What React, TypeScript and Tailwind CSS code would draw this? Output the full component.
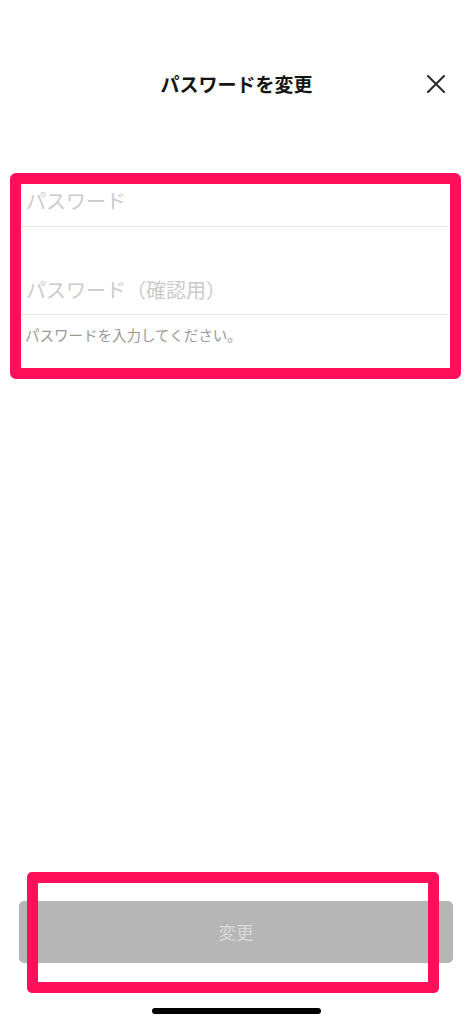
import { useState } from "react";

const font = "font-['Noto_Sans_CJK_JP','Noto_Sans',sans-serif]";

function CloseIcon() {
  return (
    <svg aria-hidden="true" viewBox="0 0 20 18" className="h-[18px] w-[20px]" fill="none" stroke="#2a2a2a" strokeWidth="2" strokeLinecap="round">
      <path d="M2 1l16 16M18 1L2 17" />
    </svg>
  );
}

export default function App() {
  const [pw, setPw] = useState("");
  const [pw2, setPw2] = useState("");

  return (
    <div className={`${font} flex h-[1024px] w-[473px] flex-col bg-white`}>
      {/* header */}
      <div className="mt-[56px] grid h-[56px] grid-cols-[1fr_auto_1fr] items-center">
        <div />
        <h1 className="text-[19px] leading-[24px] font-bold text-[#151515]">パスワードを変更</h1>
        <div className="flex justify-end pr-[27px]">
          <button aria-label="閉じる" className="flex items-center justify-center">
            <CloseIcon />
          </button>
        </div>
      </div>

      {/* form (highlighted) */}
      <div className="mt-[61px] ml-[10px] w-[451px] rounded-[6px] border-[11px] border-[#ff0f5a]">
        <div className="h-[42px] pt-[6px] pl-[5px]">
          <input
            type="password"
            value={pw}
            onChange={(e) => setPw(e.target.value)}
            placeholder="パスワード"
            className="h-[20px] w-full bg-transparent text-[20px] leading-[20px] text-[#222] outline-none placeholder:text-[#cbcbcb]"
          />
        </div>
        <div className="mr-[2px] h-px bg-[#e6e6e6]" />
        <div className="h-[87px] pt-[52px] pl-[5px]">
          <input
            type="password"
            value={pw2}
            onChange={(e) => setPw2(e.target.value)}
            placeholder="パスワード（確認用）"
            className="h-[20px] w-full bg-transparent text-[20px] leading-[20px] text-[#222] outline-none placeholder:text-[#cbcbcb]"
          />
        </div>
        <div className="mr-[2px] h-px bg-[#e6e6e6]" />
        <p className="h-[53px] pt-[10px] pl-[4px] text-[14.5px] leading-[20px] text-[#999]">
          パスワードを入力してください。
        </p>
      </div>

      {/* bottom */}
      <div className="mt-auto">
        <div className="relative ml-[19px] w-[434px]">
          <button
            disabled
            className="flex h-[62px] w-full items-center justify-center rounded-[5px] bg-[#b6b6b6] text-[17.5px] text-[#dadada]"
          >
            変更
          </button>
          <div className="pointer-events-none absolute top-[-29px] left-[8px] h-[121px] w-[412px] rounded-[5px] border-[11px] border-[#ff0f5a]" />
        </div>
        <div className="mx-auto mt-[45px] mb-[10px] h-[6px] w-[169px] rounded-full bg-black" />
      </div>
    </div>
  );
}
